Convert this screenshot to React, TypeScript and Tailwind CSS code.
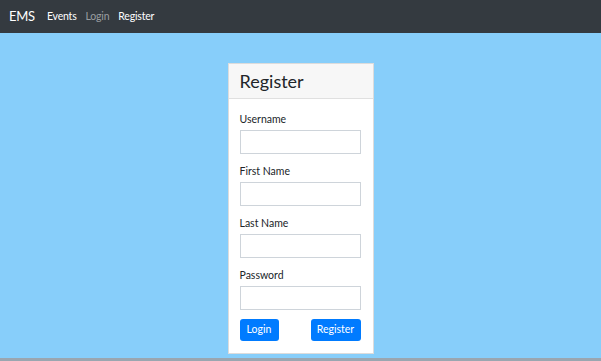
export default function App() {
  const fields = ["Username", "First Name", "Last Name", "Password"];

  return (
    <div
      className="flex flex-col h-[361px] w-full bg-[#87cefa] overflow-hidden"
      style={{ fontFamily: 'Lato, "Open Sans", sans-serif' }}
    >
      {/* Top navbar */}
      <nav className="h-[33px] shrink-0 bg-[#343a40] flex items-center pl-[9px]">
        <span className="text-white text-[13px] tracking-[-0.3px] w-[38px]">EMS</span>
        <div className="flex items-center gap-[9px] text-[10.5px] tracking-[-0.2px]">
          <span className="text-white">Events</span>
          <span className="text-[#9a9da0]">Login</span>
          <span className="text-white">Register</span>
        </div>
      </nav>

      {/* Main area */}
      <main className="flex-1 flex justify-center pt-[30px]">
        <div className="w-[146px] h-[291px] bg-white border border-[#dcdcdc] flex flex-col">
          <div className="h-[35px] bg-[#f7f7f7] border-b border-[#e0e0e0] flex items-center px-[11px]">
            <h1 className="text-[18px] text-[#212529] leading-none">Register</h1>
          </div>
          <div className="px-[11px] pt-[12px] flex flex-col">
            {fields.map((f) => (
              <div key={f} className="flex flex-col mb-[9px]">
                <label className="text-[10.5px] leading-[16px] text-[#212529] mb-[3px]">{f}</label>
                <div className="h-[24px] w-[121px] border border-[#ced4da] bg-white" />
              </div>
            ))}
            <div className="flex justify-between w-[121px]">
              <button className="h-[22px] w-[39px] rounded-[3px] bg-[#007bff] text-white text-[10.5px]">
                Login
              </button>
              <button className="h-[22px] w-[50px] rounded-[3px] bg-[#007bff] text-white text-[10.5px]">
                Register
              </button>
            </div>
          </div>
        </div>
      </main>
      <div className="h-[3px] shrink-0 bg-[#9aa6b0]" />
    </div>
  );
}
